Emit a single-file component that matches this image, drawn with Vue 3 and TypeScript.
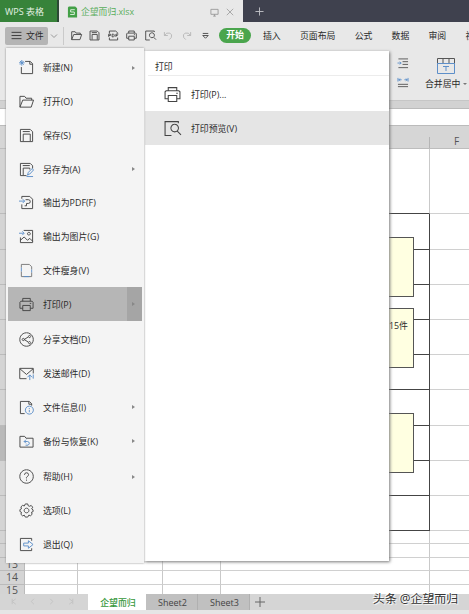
<script setup lang="ts">
interface Stroke { d: string; tone?: string }
interface MenuItem { label: string; icon: string; arrow?: boolean; active?: boolean }

const icons: Record<string, Stroke[]> = {
  create: [{ d: 'M6.5 1.5H12L14.500 4V14.500H2.500V7.500' }, { d: 'M11.500 1.500V4.500H14.500' }, { d: 'M3 0V6M0 3H6M1 1L5 5M5 1L1 5', tone: 'blue' }],
  open: [{ d: 'M1 14V2.500H6L7.500 4.500H13.500V6.500M1 14L4 6.500H15.500L13 14Z' }],
  save: [{ d: 'M1.500 1.500H12L14.500 4V14.500H1.500ZM4.500 14V6.500H12V14M4 3.800H11.500' }],
  saveAs: [{ d: 'M8 14.500H1.500V1.500H12L14.500 4V7M4.500 14V6.500H11.500V8M4 3.800H11.500' }, { d: 'M9 14L10 11L14 7L15.500 8.500L11.500 12.800ZM8 15.500H15', tone: 'blue' }],
  pdf: [{ d: 'M3 4V1.500H11.500L14.500 4.500V14.500H3V10' }, { d: 'M7 5H10Q12 5 12 7T10 9H8V11.500H6' }, { d: 'M0 6.500H6M4 4.500L6 6.500L4 8.500', tone: 'blue' }],
  image: [{ d: 'M5 1.500H14.500V14.500H1.500V9M1.500 12L5.500 8.500L9 12L11.500 10L14.500 13' }, { d: 'M10.500 3.500A1.500 1.500 0 1 0 10.600 3.500' }, { d: 'M0 4.500H5M3.500 2.500L5.500 4.500L3.500 6.500', tone: 'blue' }],
  slim: [{ d: 'M2.500 5V1.500H11L13.500 4V7M2.500 9V14.500H13.500V10', tone: 'soft' }, { d: 'M2.500 5V9M13.500 7V10M5 14.500H11', tone: 'blue' }],
  print: [{ d: 'M4 4.500V1.500H12V4.500M4 12H1V5.500L2 4.500H14L15 5.500V12H12M4 9H12V14.500H4ZM11.500 6.800H13' }],
  share: [{ d: 'M8 .8A7.200 7.200 0 1 0 8.100 .8' }, { d: 'M10 5.200L5.500 8L10 10.800M11.200 3.600A1.200 1.200 0 1 0 11.300 3.600M4.500 6.800A1.200 1.200 0 1 0 4.600 6.800M11.200 10.200A1.200 1.200 0 1 0 11.300 10.200' }],
  mail: [{ d: 'M8 13.500H.8V2.500H15.200V8M1 3L8 9L15 3' }, { d: 'M11.500 15V9.500M9 12L11.500 9.500L14 12M15.200 9V13.500', tone: 'blue' }],
  info: [{ d: 'M6 14.500H1.500V1.500H11L13.500 4V6M10.500 1.500V4.500H13.500' }, { d: 'M11 6.500A4.300 4.300 0 1 0 11.100 6.500M11 8.500V9.500M11 10.500V13', tone: 'blue' }],
  backup: [{ d: 'M1 14V2.500H6L7.500 4.500H15V14Z' }, { d: 'M5.500 8H9Q11.500 8.500 11 10.500T7 12M7.500 6L5.500 8L7.500 10', tone: 'blue' }],
  help: [{ d: 'M8 .8A7.200 7.200 0 1 0 8.100 .8M5.800 6.200Q6 4 8 4T10.200 6Q10.200 7.200 8.900 8T8 10M8 11.300V12.500' }],
  gear: [{ d: 'M6.700 1H9.300L9.800 2.900L11.200 3.500L13 2.600L14.600 4.500L13.500 6.200L15 7.300V9.200L13.300 9.900L14 12L12.300 13.600L10.500 12.900L9.300 15H6.700L5.700 13L3.800 13.700L2 12L2.700 10L1 9.100V7L2.700 6.100L2 4.200L3.800 2.500L5.700 3.200Z' }, { d: 'M8 5.500A2.500 2.500 0 1 0 8.100 5.500' }],
  exit: [{ d: 'M13.500 4V1.500H1.500V14.500H13.500V12' }, { d: 'M5 6.500H10V4L15 8L10 12V9.500H5Z', tone: 'blue' }],
  preview: [{ d: 'M7 14.500H1V1.500H13.500V3' }, { d: 'M10 4A3.600 3.600 0 1 0 10.100 4M12.500 10.500L16 14' }],
  pdfSmall: [{ d: 'M2 5V1.500H11L14 4V5M2 11V14.500H14V11M1 10V6H3.500V8H1M6 6V10H8L9 9V7L8 6ZM11.500 10V6H15M11.500 8H14' }],
  undo: [{ d: 'M2 3V8H7M2 8Q5 3 10 4.500Q14 6.500 12 11L9 14', tone: 'pale' }],
  redo: [{ d: 'M14 3V8H9M14 8Q11 3 6 4.500Q2 6.500 4 11L7 14', tone: 'pale' }],
  more: [{ d: 'M4 5H12M4 8L8 12L12 8Z' }],
}

const groups: MenuItem[][] = [
  [
    { label: '新建(N)', icon: 'create', arrow: true },
    { label: '打开(O)', icon: 'open' },
    { label: '保存(S)', icon: 'save' },
    { label: '另存为(A)', icon: 'saveAs', arrow: true },
    { label: '输出为PDF(F)', icon: 'pdf' },
    { label: '输出为图片(G)', icon: 'image' },
    { label: '文件瘦身(V)', icon: 'slim' },
    { label: '打印(P)', icon: 'print', arrow: true, active: true },
  ],
  [
    { label: '分享文档(D)', icon: 'share' },
    { label: '发送邮件(D)', icon: 'mail' },
    { label: '文件信息(I)', icon: 'info', arrow: true },
    { label: '备份与恢复(K)', icon: 'backup', arrow: true },
  ],
  [
    { label: '帮助(H)', icon: 'help', arrow: true },
    { label: '选项(L)', icon: 'gear' },
    { label: '退出(Q)', icon: 'exit' },
  ],
]

const tools = ['open', 'save', 'pdfSmall', 'print', 'preview', 'undo', 'redo', 'more']
const tabs = ['插入', '页面布局', '公式', '数据', '审阅', '视图']

interface Row { h: number; label?: string; framed?: boolean; current?: boolean }
const rows: Row[] = [
  { h: 65 },
  { h: 36, framed: true }, { h: 35, framed: true }, { h: 35, framed: true }, { h: 35, framed: true },
  { h: 35, framed: true }, { h: 36, framed: true }, { h: 35, framed: true, current: true }, { h: 35, framed: true }, { h: 35, framed: true },
  { h: 13 }, { h: 14 }, { h: 13, label: '13' }, { h: 14, label: '14' }, { h: 11, label: '15' },
]
</script>

<template>
  <div class="window">
    <header class="titlebar">
      <div class="brand">WPS 表格</div>
      <div class="doc">
        <svg class="logo" viewBox="0 0 12 12"><path class="logo-bg" d="M2 0H9L11 2V12H1V1Z" /><path class="logo-s" d="M8.500 3.500H4V6H8V8.700H3.500" /></svg>
        <span class="doc-name">企望而归.xlsx</span>
        <svg class="monitor" viewBox="0 0 10 10"><path d="M1 1.500H9V7H1ZM3.500 9H6.500M5 7V9" /></svg>
        <svg class="close" viewBox="0 0 10 10"><path d="M1 1L9 9M9 1L1 9" /></svg>
      </div>
      <svg class="add" viewBox="0 0 10 10"><path d="M5 .5V9.500M.5 5H9.500" /></svg>
    </header>

    <nav class="toolbar">
      <div class="file"><svg viewBox="0 0 12 10"><path d="M.5 1.500H11.500M.5 5H11.500M.5 8.500H11.500" /></svg>文件</div>
      <svg class="chev" viewBox="0 0 8 8"><path d="M1 2.500L4 5.500L7 2.500" /></svg>
      <div class="tools">
        <svg v-for="t in tools" :key="t" class="icon" viewBox="0 0 16 16"><path v-for="(p, i) in icons[t]" :key="i" :d="p.d" :class="p.tone" /></svg>
      </div>
      <span class="pill">开始</span>
      <div class="tabs"><span v-for="t in tabs" :key="t">{{ t }}</span></div>
    </nav>

    <section class="ribbon">
      <div class="indents">
        <svg viewBox="0 0 12 12"><path class="dark" d="M1 1H11.500M5.500 4H11.500M5.500 7H11.500M1 10.500H11.500" /><path class="blue" d="M0 5.500H4M2.500 4L4 5.500L2.500 7" /></svg>
        <svg viewBox="0 0 12 12"><path class="blue" d="M.5 1V5M11.500 1V5M1 3H4.500M7.500 3H11M3 1.800L1.500 3L3 4.200M9 1.800L10.500 3L9 4.200" /><path class="dark" d="M.5 8H11.500M.5 10.500H11.500" /></svg>
      </div>
      <div class="merge">
        <svg viewBox="0 0 18 16"><path class="dark" d="M.5 5.500V.5H17.500V5.500M6 .5V5.500M12 .5V5.500" /><path class="blue" d="M.5 5.500H17.500V15.500H.5ZM6 8.500H12M9 8.500V13" /></svg>
        <div>合并居中<i></i></div>
      </div>
    </section>
    <div class="band"></div>
    <div class="formula"></div>
    <div class="columns"><span class="corner"></span><span class="f">F</span></div>

    <main class="sheet">
      <div v-for="(r, i) in rows" :key="i" class="row" :class="{ framed: r.framed, current: r.current }" :style="{ height: r.h + 'px' }">
        <span class="num">{{ r.label }}</span><span class="c1"></span><span class="c2"></span><span class="c3"></span><span class="c4"></span><span class="c5"></span>
      </div>
      <div class="note n1"></div>
      <div class="note n2">,15件</div>
      <div class="note n3"></div>
    </main>

    <footer class="sheets">
      <div class="nav"><svg v-for="d in ['M5 2L1 5L5 8M1 2V8', 'M4 2L1 5L4 8', 'M1 2L4 5L1 8', 'M1 2L5 5L1 8M5 2V8']" :key="d" viewBox="0 0 6 10"><path :d="d" /></svg></div>
      <div class="on">企望而归</div>
      <div class="off">Sheet2</div>
      <div class="off">Sheet3</div>
      <svg class="plus" viewBox="0 0 10 10"><path d="M5 0V10M0 5H10" /></svg>
    </footer>
    <div class="status"></div>
    <div class="watermark">头条 @企望而归</div>

    <aside class="submenu">
      <h4>打印</h4>
      <div class="sub"><svg class="icon" viewBox="0 0 16 16"><path v-for="(p, i) in icons.print" :key="i" :d="p.d" /></svg>打印(P)...</div>
      <div class="sub hover"><svg class="icon" viewBox="0 0 16 16"><path v-for="(p, i) in icons.preview" :key="i" :d="p.d" /></svg>打印预览(V)</div>
    </aside>
    <aside class="menu">
      <div v-for="(g, gi) in groups" :key="gi" class="group">
        <div v-for="m in g" :key="m.label" class="item" :class="{ active: m.active }">
          <svg class="icon" viewBox="0 0 16 16"><path v-for="(p, i) in icons[m.icon]" :key="i" :d="p.d" :class="p.tone" /></svg>
          <span class="label">{{ m.label }}</span>
          <span v-if="m.arrow" class="arrow"><i></i></span>
        </div>
      </div>
    </aside>
  </div>
</template>

<style>
body { margin: 0; overflow: hidden; }
</style>

<style scoped>
* { box-sizing: border-box; }
.window { position: relative; width: 469px; height: 614px; overflow: hidden; background: #e8e8e8; color: #2b2b2b; font: 8.9px/14px "Open Sans", "Noto Sans CJK SC", sans-serif; white-space: nowrap; }
svg { display: block; flex: none; fill: none; stroke: #555; }
.icon { stroke: #444; stroke-width: 1; overflow: visible; }
.blue { stroke: #5d8fc9; }
.soft { stroke: #777; }
.pale { stroke: #b5b5b5; }
.dark { stroke: #555; }

.titlebar { display: flex; height: 22px; background: #3f414e; }
.brand { width: 59px; padding-left: 5px; background: #37833a; border-right: 2px solid #2c4935; color: #e4f1e4; font-size: 9px; line-height: 23px; }
.doc { display: flex; align-items: center; width: 184px; padding: 2px 8px 0 8px; background: #e8e8e8; }
.logo { width: 11px; height: 12px; }
.logo-bg { fill: #43a047; stroke: none; }
.logo-s { stroke: #e5f5e5; }
.doc-name { width: 132px; padding-left: 3px; color: #58ad5b; font-size: 8.800px; }
.monitor { width: 9px; height: 9px; stroke: #999; }
.close { width: 8px; height: 8px; margin-left: 7px; stroke: #999; }
.add { width: 9px; height: 9px; margin: 7px 0 0 12px; stroke: #c4c5ca; }

.toolbar { display: flex; align-items: center; height: 27px; padding-left: 5px; }
.toolbar > * { flex: none; }
.file { display: flex; align-items: center; gap: 4px; width: 43px; height: 18px; padding-left: 6px; background: #b5b5b5; border-radius: 2px; }
.file svg { width: 11px; height: 9px; stroke: #333; }
.chev { width: 8px; height: 8px; margin: 0 5px 0 2px; stroke: #999; }
.tools { display: flex; gap: 7.400px; width: 156px; height: 18px; align-items: center; padding-left: 7px; border-left: 1px solid #cacaca; }
.tools .icon { width: 11px; height: 11px; stroke-width: 1.3; }
.pill { width: 32px; height: 15px; border-radius: 8px; background: #4aa54d; color: #fff; font-weight: 700; text-align: center; line-height: 14px; }
.tabs { display: flex; gap: 19.200px; padding-left: 12px; }

.ribbon { display: flex; height: 51px; padding: 9px 0 0 395px; }
.indents { display: flex; flex-direction: column; gap: 8px; padding-left: 2px; }
.indents svg { width: 12px; height: 11px; }
.merge { padding-left: 16px; }
.merge svg { width: 18px; height: 16px; margin-left: 12px; }
.merge div { margin-top: 3px; display: flex; align-items: center; }
.merge i { margin-left: 2px; border: 2px solid transparent; border-top-color: #777; border-bottom: 0; }
.band { height: 9px; background: #d2d2d2; border-top: 1px solid #c6c6c6; border-bottom: 1px solid #bbb; }
.formula { height: 17px; background: #fff; border-bottom: 1px solid #bbb; }
.columns { display: flex; height: 23px; background: #d6d6d6; border-bottom: 1px solid #bdbdbd; }
.columns span { flex: none; }
.corner { width: 430px; margin-top: 11px; border-right: 1px solid #b5b5b5; }
.f { width: 53px; text-align: center; font-size: 10px; line-height: 30px; color: #555; }

.sheet { position: relative; height: 445px; overflow: hidden; background: #fff; }
.row { display: flex; }
.row span { border-right: 1px solid #c9c9c9; border-bottom: 1px solid #d0d0d0; }
.row .num { width: 25px; background: #d4d4d4; border-color: #bbb; text-align: center; font-size: 10.500px; line-height: 13px; color: #555; }
.row:last-child .num, .row:nth-child(15) .num { line-height: 11px; border-bottom: 0; }
.row.current .num { background: #b9b9b9; }
.row .c1 { width: 53px; }
.row .c2 { width: 85px; }
.row .c3 { width: 58px; }
.row .c4 { width: 209px; }
.row .c5 { flex: 1; border-right: 0; }
.row:nth-child(15) span { border-bottom: 0; }
.row.framed .c4 { border-color: #444; }
.row:first-child .c4 { border-bottom-color: #444; }
.note { position: absolute; left: 340px; width: 74px; height: 60px; background: #ffffe1; border: 1px solid #555; text-align: right; padding: 10px 5px 0 0; font-size: 8.900px; }
.n1 { top: 88px; }
.n2 { top: 159px; }
.n3 { top: 264px; }

.sheets { display: flex; height: 16px; background: #d5d5d5; line-height: 17px; }
.nav { display: flex; gap: 13px; width: 88px; padding: 3px 0 0 11px; }
.nav svg { width: 6px; height: 9px; stroke: #c2c2c2; }
.on { width: 58px; padding-left: 2px; background: #fff; color: #37983b; font-weight: 500; text-align: center; }
.off { width: 52px; padding-left: 2px; background: #c0c0c0; border-right: 1px solid #b0b0b0; text-align: center; font-size: 9px; color: #444; }
.plus { width: 10px; height: 10px; margin: 3px 0 0 5px; stroke: #666; }
.status { height: 4px; background: #e5e5e5; }
.watermark { position: absolute; left: 373px; top: 590px; font-size: 11.900px; line-height: 16px; color: #333; text-shadow: -1px -1px 0 #fff, 1px 1px 1px #fff; }

.submenu { position: absolute; left: 144px; top: 51px; width: 245px; height: 510px; background: #fff; box-shadow: 1px 1px 3px #777; }
h4 { height: 25px; margin: 0 0 0 4px; padding-left: 7px; border-bottom: 1px solid #ececec; font-size: 8.900px; font-weight: 400; line-height: 31px; }
.sub { display: flex; align-items: center; gap: 10px; height: 34px; margin-left: 1px; padding: 1px 0 0 19px; }
.sub .icon { width: 17px; height: 17px; }
.sub:nth-child(2) { margin-top: 1px; }
.hover { background: #e5e5e5; }
.menu { position: absolute; left: 6px; top: 48px; width: 138px; height: 515px; padding: 3px 2px; background: #f4f4f4; box-shadow: 0 0 2px #888; display: flex; flex-direction: column; gap: 2px; }
.item { display: flex; align-items: center; height: 33.750px; padding-left: 11px; }
.item .icon { width: 15px; height: 15px; }
.label { flex: 1; padding: 1px 0 0 9px; }
.arrow { width: 15px; height: 100%; display: flex; align-items: center; justify-content: center; }
.arrow i { margin-right: 2px; border: 2.500px solid transparent; border-left: 3px solid #888; border-right: 0; }
.active { background: #b6b6b6; }
.active .arrow { background: #a5a5a5; }
</style>
